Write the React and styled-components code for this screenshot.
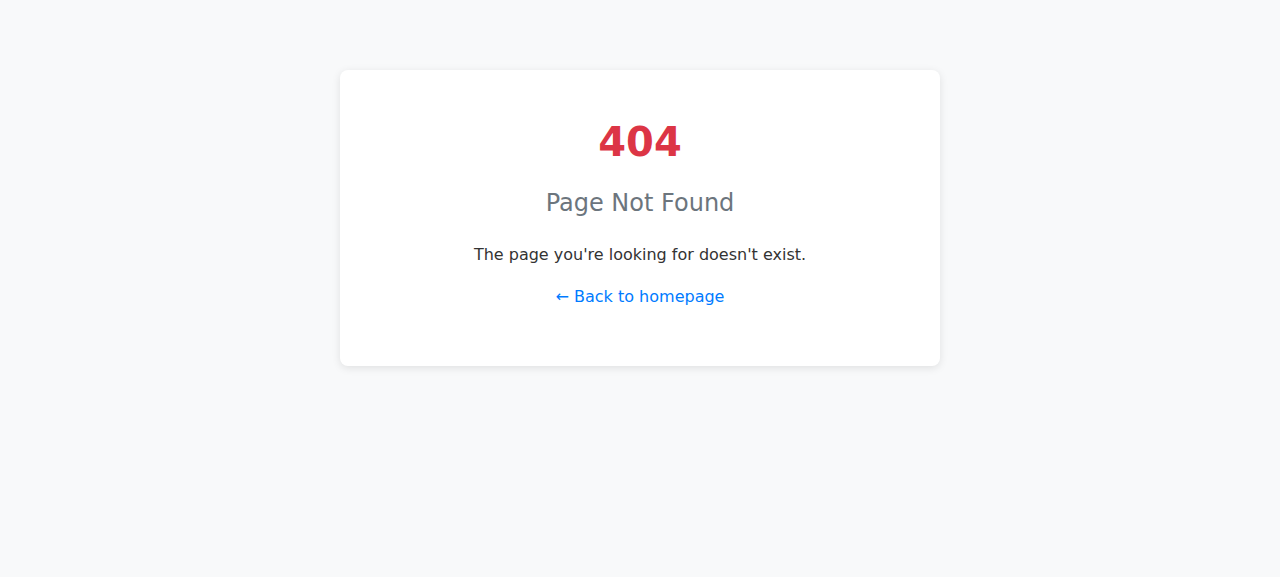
import React from "react";
import styled, { createGlobalStyle } from "styled-components";

const Global = createGlobalStyle`
  html, body { margin: 0; padding: 0; }
  body {
    background: #f8f9fa;
    font-family: "DejaVu Sans", sans-serif;
    color: #333;
  }
`;

const Page = styled.div`
  padding: 20px;
`;

const Card = styled.div`
  max-width: 600px;
  margin: 50px auto;
  box-sizing: border-box;
  background: #fff;
  border-radius: 8px;
  box-shadow: 0 2px 8px rgba(0, 0, 0, 0.1);
  padding: 40px 40px 60px;
  text-align: center;
`;

const Code = styled.h1`
  margin: 9px 0 0;
  font-size: 40px;
  font-weight: 700;
  color: #dc3545;
`;

const Title = styled.h2`
  margin: 24px 0 0;
  font-size: 24px;
  font-weight: 400;
  color: #6c757d;
`;

const Text = styled.p`
  margin: 28px 0 0;
  font-size: 16px;
`;

const LinkRow = styled.p`
  margin: 23px 0 0;
  font-size: 16px;
`;

const Link = styled.a`
  color: #007bff;
  text-decoration: none;
`;

export default function App() {
  return (
    <>
      <Global />
      <Page>
        <Card>
          <Code>404</Code>
          <Title>Page Not Found</Title>
          <Text>The page you're looking for doesn't exist.</Text>
          <LinkRow>
            <Link href="#">← Back to homepage</Link>
          </LinkRow>
        </Card>
      </Page>
    </>
  );
}
